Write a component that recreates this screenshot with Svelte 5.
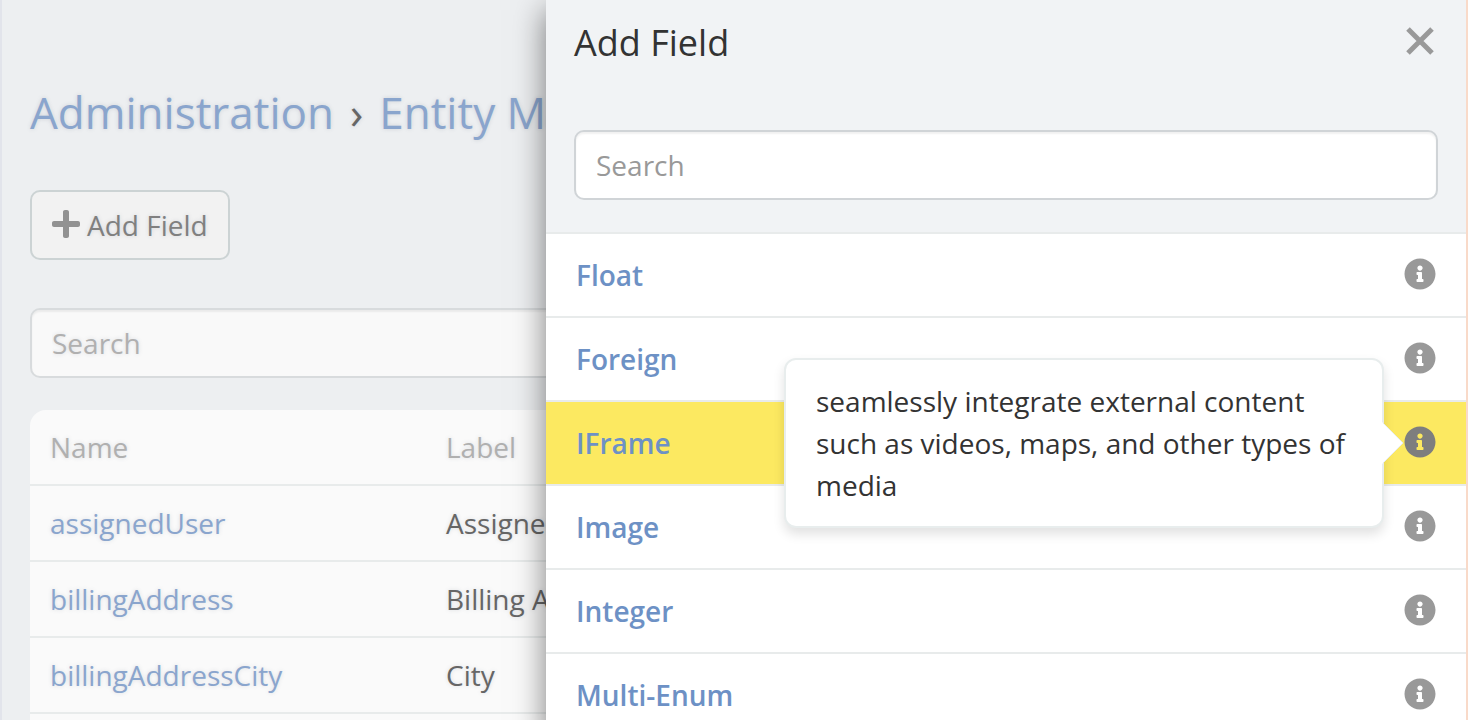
<script>
  const rows = [
    { name: 'assignedUser', label: 'Assigned User' },
    { name: 'billingAddress', label: 'Billing Address' },
    { name: 'billingAddressCity', label: 'City' }
  ];

  const types = [
    { name: 'Float' },
    { name: 'Foreign' },
    {
      name: 'IFrame',
      info: 'seamlessly integrate external content such as videos, maps, and other types of media'
    },
    { name: 'Image' },
    { name: 'Integer' },
    { name: 'Multi-Enum' }
  ];
</script>

<div class="app">
  <main class="page">
    <div class="content">
      <h1><a href="#admin">Administration</a><span class="sep">›</span><a href="#entities">Entity Manager</a></h1>
      <button class="add" type="button">
        <svg viewBox="0 0 448 448" width="28" height="28" aria-hidden="true">
          <path d="M416 176H272V32c0-17.67-14.33-32-32-32h-32c-17.67 0-32 14.33-32 32v144H32c-17.67 0-32 14.33-32 32v32c0 17.67 14.33 32 32 32h144v144c0 17.67 14.33 32 32 32h32c17.67 0 32-14.33 32-32V272h144c17.67 0 32-14.33 32-32v-32c0-17.67-14.33-32-32-32z" />
        </svg>
        Add Field
      </button>
      <input class="search" type="search" placeholder="Search" aria-label="Search fields" />
      <div class="panel">
        <table>
          <thead>
            <tr><th class="name">Name</th><th>Label</th></tr>
          </thead>
          <tbody>
            {#each rows as row}
              <tr><td><a href="#{row.name}">{row.name}</a></td><td>{row.label}</td></tr>
            {/each}
          </tbody>
        </table>
      </div>
    </div>
  </main>

  <div class="dialog" role="dialog" aria-labelledby="dialog-title">
    <header>
      <div class="title">
        <h2 id="dialog-title">Add Field</h2>
        <button class="close" type="button" aria-label="Close">
          <svg viewBox="0 0 28 28" width="28" height="28" aria-hidden="true">
            <path d="M2 2 26 26M26 2 2 26" />
          </svg>
        </button>
      </div>
      <input class="search" type="search" placeholder="Search" aria-label="Search field types" />
    </header>
    <ul>
      {#each types as type}
        <li class:active={type.info}>
          <a href="#{type.name}">{type.name}</a>
          <button class="info" type="button" aria-label="About {type.name}">
            <svg viewBox="0 0 512 512" width="32" height="32" aria-hidden="true">
              <path d="M256 8C119.043 8 8 119.083 8 256c0 136.997 111.043 248 248 248s248-111.003 248-248C504 119.083 392.957 8 256 8zm0 110c23.196 0 42 18.804 42 42s-18.804 42-42 42-42-18.804-42-42 18.804-42 42-42zm56 254c0 6.627-5.373 12-12 12h-88c-6.627 0-12-5.373-12-12v-24c0-6.627 5.373-12 12-12h12v-64h-12c-6.627 0-12-5.373-12-12v-24c0-6.627 5.373-12 12-12h64c6.627 0 12 5.373 12 12v100h12c6.627 0 12 5.373 12 12v24z" />
            </svg>
          </button>
          {#if type.info}
            <div class="tip" role="tooltip">
              {type.info}
              <svg class="arrow" viewBox="0 0 22 42" width="22" height="42" aria-hidden="true">
                <path class="fill" d="M0 0 21 21 0 42z" />
                <path class="edge" d="M1 1 21 21 1 41" />
              </svg>
            </div>
          {/if}
        </li>
      {/each}
    </ul>
  </div>
</div>

<style>
  :global(body) {
    margin: 0;
    overflow: hidden;
  }

  .app {
    display: grid;
    grid-template-columns: 546px minmax(0, 1fr);
    height: 100vh;
    overflow: hidden;
    font: 28px/40px 'Open Sans', sans-serif;
    color: #333;
  }

  *,
  *::before {
    box-sizing: border-box;
  }

  a {
    text-decoration: none;
  }

  button,
  input {
    font: inherit;
    margin: 0;
  }

  svg {
    display: block;
  }

  .page {
    overflow: hidden;
    background: #edeff1;
    border-left: 2px solid #e2e4eb;
    color: #666;
    text-shadow: 0 0 4px rgba(90, 100, 120, 0.2);
  }

  .content {
    display: flex;
    flex-direction: column;
    align-items: flex-start;
    min-width: 1000px;
    min-height: 100%;
    padding: 82px 28px 0;
  }

  .page a {
    color: #8aa5cd;
  }

  h1 {
    margin: 0 0 48px;
    font-size: 44px;
    line-height: 60px;
    font-weight: 400;
  }

  .sep {
    margin: 0 16px;
  }

  .add {
    display: flex;
    align-items: center;
    gap: 7px;
    height: 70px;
    padding: 0 20px;
    margin-bottom: 48px;
    border: 2px solid #ccd3d4;
    border-radius: 10px;
    background: #f2f2f2;
    color: #808080;
    text-shadow: inherit;
  }

  .add svg {
    fill: #929292;
    margin-bottom: 2px;
  }

  .search {
    display: block;
    appearance: none;
    width: 100%;
    height: 70px;
    padding: 0 20px;
    border: 2px solid #d0d4d7;
    border-radius: 10px;
    background: #fff;
    box-shadow: inset 0 2px 2px rgba(0, 0, 0, 0.06);
    outline: none;
  }

  .search::placeholder {
    color: #999;
    opacity: 1;
  }

  .page .search {
    margin-bottom: 32px;
    border-color: #d8dbdd;
    background: #f9f9f9;
    text-shadow: inherit;
  }

  .page .search::placeholder {
    color: #b0b0b0;
  }

  .panel {
    flex: 1;
    width: 100%;
    min-height: 320px;
    background: #fafafa;
    border-radius: 16px 16px 0 0;
  }

  table {
    width: 100%;
    border-spacing: 0;
    table-layout: fixed;
  }

  th,
  td {
    height: 76px;
    padding: 0 20px;
    border-bottom: 2px solid #e8ebeb;
    text-align: left;
    font-weight: 400;
  }

  th {
    color: #b0b0b0;
  }

  .name {
    width: 396px;
  }

  .dialog {
    position: relative;
    z-index: 1;
    background: #fff;
    border-right: 2px solid #f9dac9;
    box-shadow: 0 10px 30px rgba(0, 0, 0, 0.5);
  }

  header {
    padding: 18px 28px 32px;
    background: #f1f3f5;
  }

  .title {
    display: flex;
    justify-content: space-between;
    height: 112px;
  }

  h2 {
    margin: 0;
    font-size: 36px;
    line-height: 50px;
    font-weight: 400;
  }

  .close,
  .info {
    border: 0;
    padding: 0;
    background: none;
  }

  .close {
    height: 46px;
    padding-right: 4px;
  }

  .close path {
    fill: none;
    stroke: #999;
    stroke-width: 5;
  }

  ul {
    margin: 0;
    padding: 0;
    list-style: none;
  }

  li {
    position: relative;
    display: flex;
    align-items: center;
    justify-content: space-between;
    height: 84px;
    padding: 0 30px;
    border-top: 2px solid #e8ebeb;
  }

  li a {
    color: #6d91c5;
    font-weight: 600;
  }

  .info {
    margin-bottom: 2px;
    fill: #999;
  }

  .active {
    background: #fce961;
  }

  .active .info {
    fill: #7e7e7e;
  }

  .tip {
    position: absolute;
    z-index: 2;
    top: -44px;
    right: 82px;
    width: 600px;
    padding: 20px 30px;
    border: 2px solid #e8eded;
    border-radius: 12px;
    background: #fff;
    box-shadow: 0 6px 12px rgba(0, 0, 0, 0.12);
    line-height: 42px;
  }

  .arrow {
    position: absolute;
    top: 62px;
    right: -22px;
  }

  .fill {
    fill: #fff;
  }

  .edge {
    fill: none;
    stroke: #e8eded;
    stroke-width: 1;
  }
</style>
